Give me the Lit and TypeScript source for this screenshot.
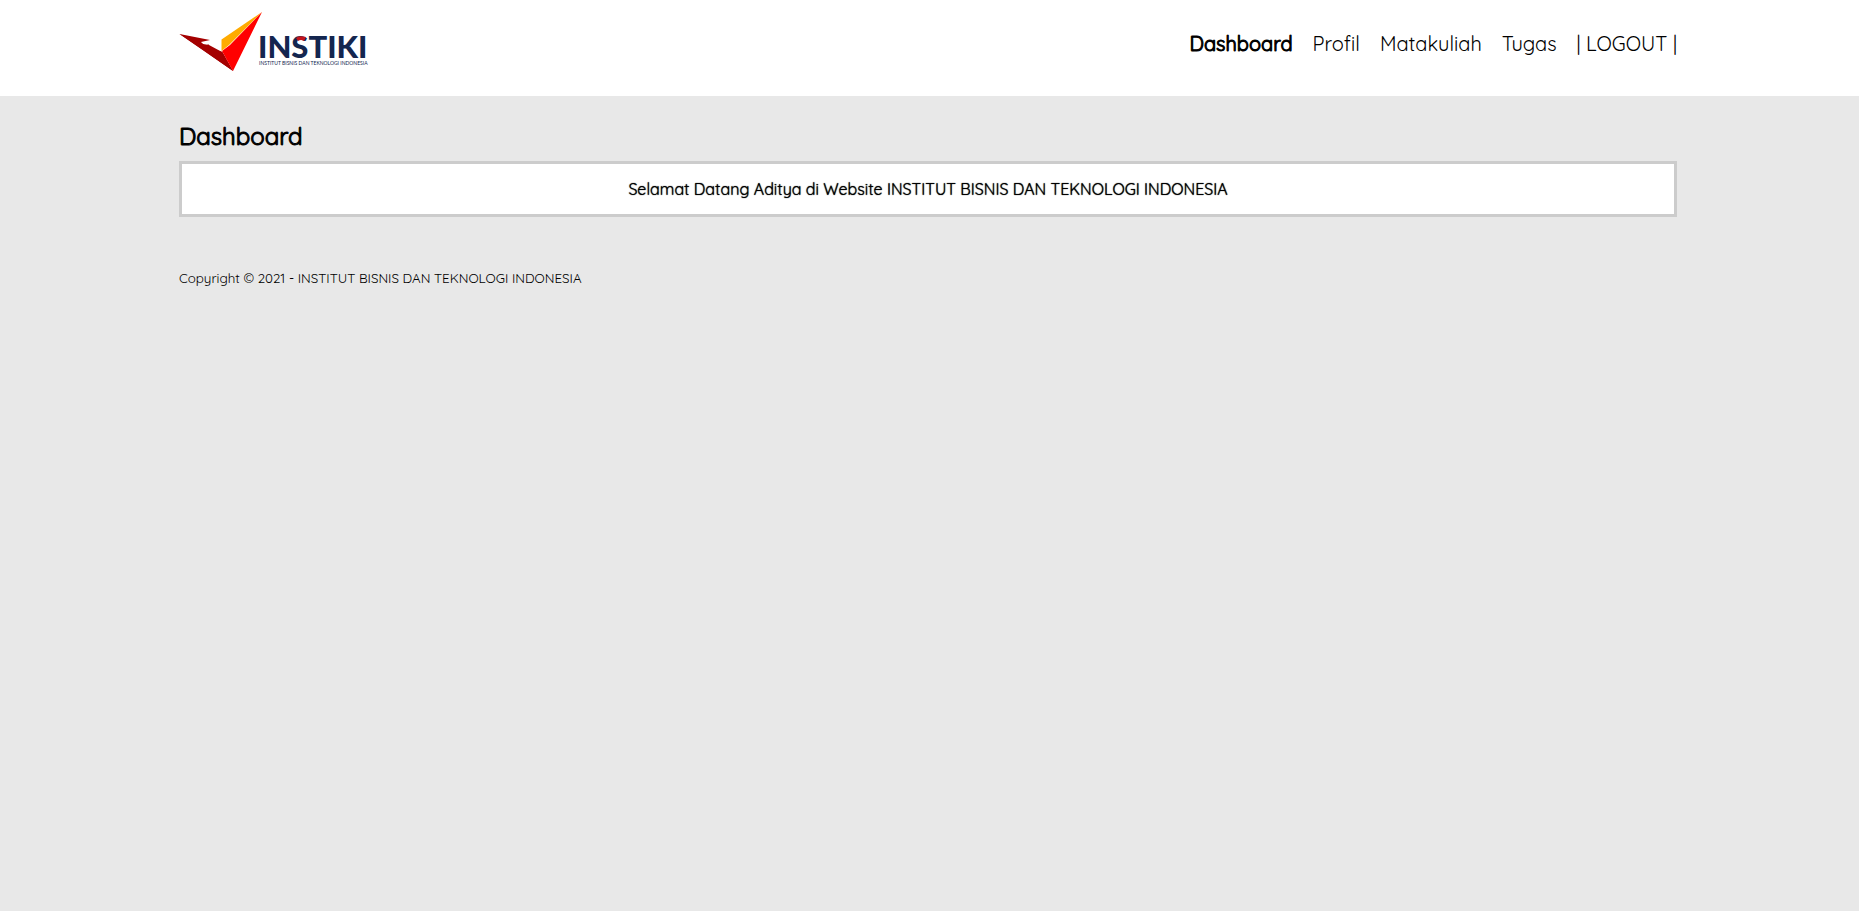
import { LitElement, html, css } from "lit";
import { customElement, state } from "lit/decorators.js";

const LINKS = ["Dashboard", "Profil", "Matakuliah", "Tugas", "| LOGOUT |"];

@customElement("app-root")
export class AppRoot extends LitElement {
  static styles = css`
    :host {
      display: block;
      min-height: 100vh;
      background: #e8e8e8;
      color: #000;
      font-family: Quicksand, Lato, sans-serif;
      font-size: 16px;
      line-height: 20px;
    }
    .container {
      padding-left: 179px;
      padding-right: 182px;
    }
    header {
      background: #fff;
    }
    .bar {
      display: flex;
      justify-content: space-between;
      align-items: flex-start;
      height: 96px;
    }
    .brand {
      display: block;
      padding-top: 11px;
    }
    .logo {
      display: block;
      width: 190px;
      height: 62px;
    }
    .mark {
      font-family: Lato, sans-serif;
      font-weight: 900;
      font-size: 31px;
      fill: #14264f;
    }
    .motto {
      font-family: Lato, sans-serif;
      font-weight: 400;
      font-size: 5px;
      fill: #14264f;
    }
    ul {
      display: flex;
      gap: 20px;
      margin: 0;
      padding: 31px 0 0;
      list-style: none;
    }
    .link {
      color: inherit;
      text-decoration: none;
      font-size: 20px;
      line-height: 25px;
      font-weight: 400;
    }
    .link.active,
    h1 {
      font-weight: 400;
      -webkit-text-stroke: 1px currentColor;
    }
    h1 {
      margin: 0;
      padding: 25px 0 10px;
      font-size: 24px;
      line-height: 30px;
    }
    .box {
      padding: 15px;
      border: 3px solid #ccc;
      background: #fff;
      text-align: center;
    }
    .welcome {
      margin: 0;
      font-size: 16px;
      font-weight: 400;
      text-shadow: 0 0 1px #000;
    }
    footer {
      padding-top: 51px;
    }
    small {
      display: block;
    }
  `;

  @state() private active = "Dashboard";

  render() {
    return html`
      <header>
        <div class="container bar">
          <a class="brand" href="#" aria-label="INSTIKI">
            <svg class="logo" viewBox="0 0 190 62" aria-hidden="true">
              <path fill="#a40000" d="M0.5 23 L31 29 L22 31 L26 35 L30 33 L28 36 L43.500 41 L54 60 Z" />
              <path fill="#a40000" d="M0.5 23 L24 39 L54 60 L43 41 L30 34 L24 33 Z" />
              <path fill="#ffab00" d="M83 1 L42.500 28.500 L42.500 40 L50 34 Z" />
              <path fill="#ff0000" d="M83 1 L54 60 L43 40 L51 34 Z" />
              <text class="mark" x="79" y="47">INSTIKI</text>
              <path fill="#c4141c" d="M117 27 Q120 24 127 26 L125 30 Q122 28 119 30 Z" />
              <text class="motto" x="80" y="54">INSTITUT BISNIS DAN TEKNOLOGI INDONESIA</text>
            </svg>
          </a>
          <nav>
            <ul>
              ${LINKS.map(
                (name) => html`<li>
                  <a class="link ${name === this.active ? "active" : ""}" href="#">${name}</a>
                </li>`,
              )}
            </ul>
          </nav>
        </div>
      </header>
      <main class="container">
        <h1>Dashboard</h1>
        <div class="box">
          <h4 class="welcome">Selamat Datang Aditya di Website INSTITUT BISNIS DAN TEKNOLOGI INDONESIA</h4>
        </div>
      </main>
      <footer class="container">
        <small>Copyright © 2021 - INSTITUT BISNIS DAN TEKNOLOGI INDONESIA</small>
      </footer>
    `;
  }
}
